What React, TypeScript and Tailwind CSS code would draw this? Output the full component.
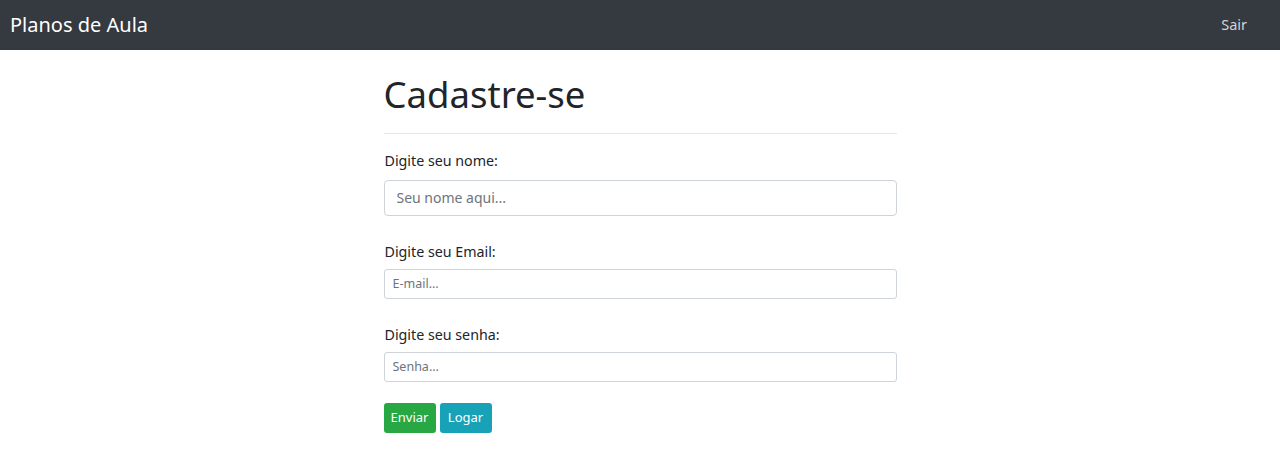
export default function App() {
  return (
    <div className="min-h-[470px] bg-white text-[#212529]" style={{ fontFamily: '"Noto Sans", "Open Sans", sans-serif' }}>
      <nav className="flex h-[50px] items-center justify-between bg-[#343a40] pl-[10px] pr-[33px]">
        <a href="#" className="text-[20px] text-white">
          Planos de Aula
        </a>
        <a href="#" className="text-[14.5px] text-[#d2d3d5]">
          Sair
        </a>
      </nav>

      <main className="mx-auto w-[513px] pt-[23px]">
        <h1 className="text-[36.5px] leading-[1.2] font-normal">Cadastre-se</h1>
        <hr className="mt-[16px] mb-[16px] border-t border-[#e5e7ea]" />

        <form className="flex flex-col">
          <label className="mb-[8px] pl-px text-[14.25px] leading-[22px]">Digite seu nome:</label>
          <input
            type="text"
            placeholder="Seu nome aqui..."
            className="h-[36px] w-full rounded-[4px] border border-[#ced4da] px-[12px] text-[14px] placeholder:text-[#6c757d] focus:outline-none"
          />

          <label className="mt-[25px] mb-[6px] pl-px text-[14.25px] leading-[22px]">Digite seu Email:</label>
          <input
            type="email"
            placeholder="E-mail..."
            className="h-[30px] w-full rounded-[3px] border border-[#ced4da] px-[8px] text-[12.5px] placeholder:text-[#6c757d] focus:outline-none"
          />

          <label className="mt-[25px] mb-[6px] pl-px text-[14.25px] leading-[22px]">Digite seu senha:</label>
          <input
            type="password"
            placeholder="Senha..."
            className="h-[30px] w-full rounded-[3px] border border-[#ced4da] px-[8px] text-[12.5px] placeholder:text-[#6c757d] focus:outline-none"
          />

          <div className="mt-[21px] flex gap-[4px]">
            <button type="button" className="h-[30px] w-[52px] rounded-[3px] bg-[#28a745] text-[13px] text-white">
              Enviar
            </button>
            <button type="button" className="h-[30px] w-[52px] rounded-[3px] bg-[#17a2b8] text-[13px] text-white">
              Logar
            </button>
          </div>
        </form>
      </main>
    </div>
  )
}
